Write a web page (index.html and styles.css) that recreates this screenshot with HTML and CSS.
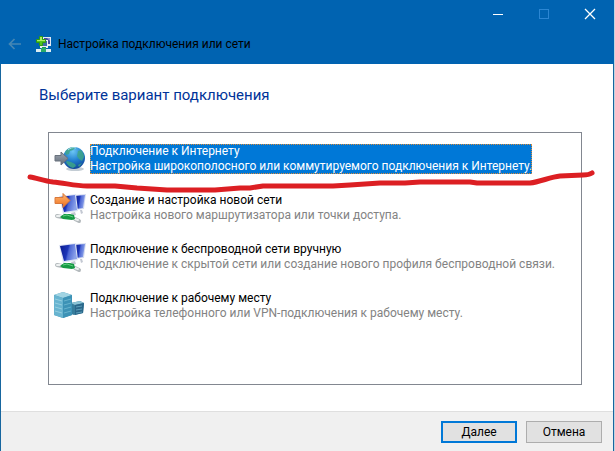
FILE: index.html
```html
<!DOCTYPE html>
<html lang="ru">
<head>
    <meta charset="UTF-8">
    <meta name="viewport" content="width=device-width, initial-scale=1.0">
    <title>Настройка подключения или сети</title>
    <link rel="stylesheet" href="styles.css">
</head>
<body>
    <div class="window">
        <header class="header">
            <div class="caption">
                <button class="caption-btn" aria-label="Свернуть">
                    <svg width="12" height="12" viewBox="0 0 12 12"><path d="M1 6.500h10" stroke="#fff"/></svg>
                </button>
                <button class="caption-btn" aria-label="Развернуть" disabled>
                    <svg width="12" height="12" viewBox="0 0 12 12"><rect x="1.500" y="1.500" width="9" height="9" fill="none" stroke="#2b86d3"/></svg>
                </button>
                <button class="caption-btn" aria-label="Закрыть">
                    <svg width="12" height="12" viewBox="0 0 12 12"><path d="M1 1l10 10M11 1L1 11" stroke="#fff" stroke-width="1.300"/></svg>
                </button>
            </div>
            <div class="title-row">
                <button class="back" aria-label="Назад" disabled>
                    <svg width="14" height="12" viewBox="0 0 14 12"><path d="M6.500 1L1.500 6l5 5M1.500 6H13" fill="none" stroke="#4687b4" stroke-width="1.700"/></svg>
                </button>
                <svg class="title-icon" width="16" height="16" viewBox="0 0 16 16">
                    <rect x="6" y="1" width="9" height="9" fill="#e3eaf4"/>
                    <rect x="8" y="2" width="6" height="6" fill="#4549a4"/>
                    <path d="M11 2h3v3z" fill="#8d93d8"/>
                    <rect x="4" y="4" width="8" height="8" fill="#e9eff7"/>
                    <rect x="5" y="5" width="6" height="5" fill="#3d6aa8"/>
                    <path d="M6 11h4v2H6z" fill="#159b5b"/>
                    <rect x="0" y="13" width="15" height="3" fill="#dcecf0"/>
                    <rect x="5" y="12" width="5" height="4" fill="#28aa6a"/>
                    <path d="M3.500.5h3v3h3v3h-3v3h-3v-3h-3v-3h3z" fill="#50c41d" stroke="#2f9a12"/>
                    <path d="M4 1h2v3h3v1H1V4h3z" fill="#a9ed64"/>
                </svg>
                <span class="title">Настройка подключения или сети</span>
            </div>
        </header>

        <main class="content">
            <h1>Выберите вариант подключения</h1>
            <div class="options">
                <button class="option selected">
                    <svg width="32" height="32" viewBox="0 0 32 32">
                        <defs>
                            <radialGradient id="globe" cx=".45" cy=".2" r=".85">
                                <stop offset="0" stop-color="#6cc6f4"/>
                                <stop offset=".5" stop-color="#2180d0"/>
                                <stop offset="1" stop-color="#0f3f92"/>
                            </radialGradient>
                            <linearGradient id="grayArrow" x2="0" y2="1">
                                <stop offset="0" stop-color="#a0a8b2"/>
                                <stop offset="1" stop-color="#616b77"/>
                            </linearGradient>
                        </defs>
                        <ellipse cx="21" cy="26" rx="9" ry="2" fill="#c3ccd4"/>
                        <circle cx="20" cy="15" r="11" fill="url(#globe)"/>
                        <path d="M11 9c2-3 4-4 8-5l2 1-2 2-3 1-1 3-3 1zM24 8l3-1c2 2 3 5 3 7l-2 4-3-2-2-3zM13 18l4 1 4 2 1 2-3 2c-4-1-6-4-7-6zM24 22l4-2-3 4z" fill="#3ea487" fill-opacity=".85"/>
                        <path d="M14 7c2-2 5-3 8-2" fill="none" stroke="#a3e0e6"/>
                        <path d="M1 12.500h6V9l7 6.500L7 22v-4H1z" fill="url(#grayArrow)" stroke="#6a737e"/>
                    </svg>
                    <span class="option-text">
                        <span class="option-name">Подключение к Интернету</span>
                        <span class="option-desc">Настройка широкополосного или коммутируемого подключения к Интернету.</span>
                    </span>
                </button>
                <button class="option">
                    <svg width="32" height="32" viewBox="0 0 32 32">
                        <defs>
                            <linearGradient id="screen" x2="1" y2=".25">
                                <stop offset="0" stop-color="#0a1a8e"/>
                                <stop offset=".5" stop-color="#1c35b8"/>
                                <stop offset=".6" stop-color="#4c66d4"/>
                                <stop offset="1" stop-color="#8ba2ea"/>
                            </linearGradient>
                            <linearGradient id="orangeArrow" x2="0" y2="1">
                                <stop offset="0" stop-color="#ffb873"/>
                                <stop offset="1" stop-color="#ee6f1c"/>
                            </linearGradient>
                            <g id="computers">
                                <path d="M20 3l12-1-2 15-9 1z" fill="#d5dcf0"/>
                                <path d="M21 4l10-1-2 13-7 1z" fill="url(#screen)"/>
                                <path d="M5 4l17-2 2 17-15 3z" fill="#dfe5f4"/>
                                <path d="M6 5l15-2 2 15-13 2z" fill="url(#screen)"/>
                                <path d="M17 21l4-1 1 3-4 1zM26 18l2 0 1 3-2 1z" fill="#c3c8d2"/>
                                <path d="M3 24l5 1M21 27l4 2" stroke="#b4babd" stroke-width="4" stroke-linecap="round"/>
                                <path d="M3 24l4 0M21 27l3 1" stroke="#eef1f1" stroke-width="2" stroke-linecap="round"/>
                                <path d="M6 25l4-3h6l4 1 1 4-3 1-9-1z" fill="#159a43"/>
                                <path d="M9 24l4-1 6 2" fill="none" stroke="#62cf82"/>
                            </g>
                        </defs>
                        <use href="#computers"/>
                        <path d="M1 5.500h8V1.500l7 7-7 7v-4H1z" fill="url(#orangeArrow)" stroke="#d9793c"/>
                    </svg>
                    <span class="option-text">
                        <span class="option-name">Создание и настройка новой сети</span>
                        <span class="option-desc">Настройка нового маршрутизатора или точки доступа.</span>
                    </span>
                </button>
                <button class="option">
                    <svg width="32" height="32" viewBox="0 0 32 32"><use href="#computers"/></svg>
                    <span class="option-text">
                        <span class="option-name">Подключение к беспроводной сети вручную</span>
                        <span class="option-desc">Подключение к скрытой сети или создание нового профиля беспроводной связи.</span>
                    </span>
                </button>
                <button class="option">
                    <svg width="32" height="32" viewBox="0 0 32 32">
                        <path d="M17 13l9-2 4 2-1 10-9 2-3-1z" fill="#367d9c"/>
                        <path d="M17 13l9-2 4 2-9 2z" fill="#8bc3d5"/>
                        <path d="M21 15l9-2-1 10-8 2z" fill="#2a678a"/>
                        <path d="M22 17l6-1M22 20l6-1M22 23l6-1" stroke="#5d9fba"/>
                        <path d="M0 5l9-3 9 3v20l-9 3-9-3z" fill="#4b9bba"/>
                        <path d="M0 5l9-3 9 3-9 3z" fill="#a1d4e3"/>
                        <path d="M0 5l9 3v20l-9-3z" fill="#68b4d0"/>
                        <path d="M9 8l9-3v20l-9 3z" fill="#3c92b6"/>
                        <path d="M1 9l7 2M1 13l7 2M1 17l7 2M1 21l7 2" stroke="#95cfe1"/>
                        <path d="M10 11l7-2M10 15l7-2M10 19l7-2M10 23l7-2" stroke="#66b3ce"/>
                    </svg>
                    <span class="option-text">
                        <span class="option-name">Подключение к рабочему месту</span>
                        <span class="option-desc">Настройка телефонного или VPN-подключения к рабочему месту.</span>
                    </span>
                </button>
            </div>
        </main>

        <footer class="footer">
            <button class="btn primary">Далее</button>
            <button class="btn">Отмена</button>
        </footer>

        <!-- hand-drawn underline below the first option -->
        <svg class="marker" width="615" height="24" viewBox="0 170 615 24" aria-hidden="true">
            <path d="M30 177C37 178 44 181 53 182C65 183 75 186 87 186L115 186L137 188L167 190L215 190L240 188L250 188L263 186L333 186L350 185L380 183L405 183L420 182L470 182L477 183L530 183C540 182 550 177 560 176L583 175Q589 175 592 173"/>
        </svg>
    </div>
</body>
</html>
```
FILE: styles.css
```css
* {
    box-sizing: border-box;
}
body {
    margin: 0;
    background: #c3d3df;
    font-family: Roboto, "Noto Sans", sans-serif;
    font-size: 12px;
    line-height: 15px;
    color: #000;
}
button {
    font: inherit;
    color: inherit;
    margin: 0;
    padding: 0;
}
.window {
    position: relative;
    display: flex;
    flex-direction: column;
    min-height: 100vh;
    margin-right: 1px;
    background: #fff;
    border: 0 solid #17669f;
    border-width: 0 1px;
}

/* title bar */
.header {
    margin: 0 -1px;
    background: #0063b1;
}
.caption {
    display: flex;
    justify-content: flex-end;
    height: 28px;
    padding-right: 1px;
}
.caption-btn {
    display: flex;
    align-items: center;
    justify-content: center;
    width: 46px;
    background: none;
    border: none;
}
.title-row {
    display: flex;
    align-items: center;
    height: 36px;
    padding: 0 8px 4px;
}
.back {
    display: flex;
    width: 28px;
    background: none;
    border: none;
}
.title {
    margin-left: 6px;
}

/* page */
.content {
    flex: 1;
    padding: 20px 31px 26px 38px;
}
h1 {
    margin: 0 0 26px;
    font-size: 15px;
    font-weight: normal;
    line-height: 22px;
    color: #003399;
}
.options {
    display: flex;
    flex-direction: column;
    gap: 17px;
    min-height: 253px;
    margin-left: 9px;
    padding: 10px 5px;
    border: 1px solid #828790;
}
.option {
    display: flex;
    align-items: center;
    gap: 4px;
    background: none;
    border: none;
    text-align: left;
}
.option svg {
    flex: none;
}
.option-text {
    white-space: nowrap;
}
.option-name,
.option-desc {
    display: block;
}
.option-desc {
    color: #838383;
}
.selected .option-text {
    outline: 1px dotted #d98b3c;
    outline-offset: -1px;
    background: #0078d7;
    color: #fff;
}
.selected .option-desc {
    color: #fff;
}

/* buttons */
.footer {
    display: flex;
    justify-content: flex-end;
    gap: 9px;
    height: 40px;
    padding: 9px 11px;
    background: #f0f0f0;
    border-top: 1px solid #dfdfdf;
}
.btn {
    width: 76px;
    height: 22px;
    background: #e1e1e1;
    border: 1px solid #adadad;
}
.btn.primary {
    border: 2px solid #0078d7;
}

.marker {
    position: absolute;
    top: 170px;
    left: -1px;
    pointer-events: none;
}
.marker path {
    fill: none;
    stroke: #dc1f23;
    stroke-width: 5;
    stroke-linecap: round;
    stroke-linejoin: round;
}
```
